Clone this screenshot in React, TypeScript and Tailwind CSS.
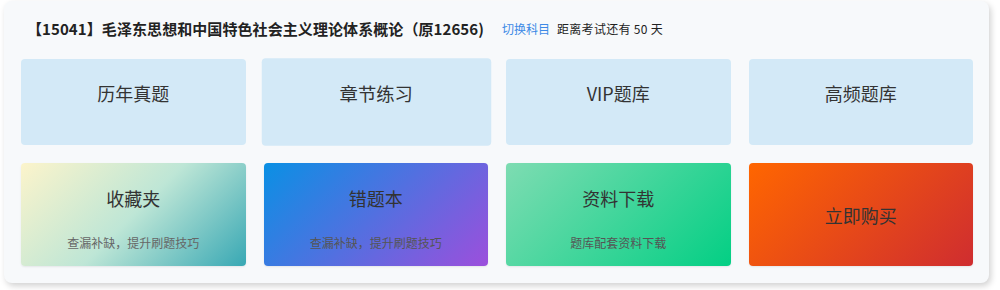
import React from "react";

const font = { fontFamily: '"Noto Sans CJK SC", "Noto Sans", sans-serif' };

export default function App() {
  return (
    <div className="w-[1000px] h-[290px] bg-white overflow-hidden" style={font}>
      <div className="ml-[4px] mt-[1px] w-[985px] h-[282px] rounded-lg bg-[#f7f9fb] shadow-[2px_3px_6px_rgba(0,0,0,0.18)] pt-[16px] pl-[17px] pr-[16px]">
        <div className="flex items-center h-[24px] pl-[6px]">
          <span className="text-[15px] font-bold text-[#222] leading-[24px] tracking-[0.08px]">【15041】毛泽东思想和中国特色社会主义理论体系概论（原12656)</span>
          <span className="ml-[18px] text-[12px] text-[#3d8ae6]">切换科目</span>
          <span className="ml-[7px] text-[12px] text-[#222] tracking-[0.3px]">距离考试还有 50 天</span>
        </div>
        <div className="mt-[18px] grid grid-cols-4 gap-x-[18px] gap-y-[18px]">
          {["历年真题", "章节练习", "VIP题库", "高频题库"].map((t, i) => (
            <div
              key={t}
              className={
                "h-[86px] rounded-[4px] bg-[#d3e9f7] flex justify-center pt-[22px] " +
                (i === 1 ? "scale-[1.02]" : "")
              }
            >
              <span className="text-[18px] leading-[24px] text-[#333]">{t}</span>
            </div>
          ))}
          <div className="h-[103px] rounded-[4px] bg-[linear-gradient(135deg,#fcf4cb_0%,#bee6d6_50%,#38a8b4_100%)] flex flex-col items-center pt-[23px] shadow-[0_1px_2px_rgba(0,0,0,0.08)]">
            <span className="text-[18px] leading-[24px] text-[#333]">收藏夹</span>
            <span className="mt-[25px] text-[12px] leading-[16px] text-[#666]">查漏补缺，提升刷题技巧</span>
          </div>
          <div className="h-[103px] rounded-[4px] bg-[linear-gradient(135deg,#0a90e4_0%,#9c4fdc_100%)] flex flex-col items-center pt-[23px] shadow-[0_1px_2px_rgba(0,0,0,0.08)]">
            <span className="text-[18px] leading-[24px] text-[#333]">错题本</span>
            <span className="mt-[25px] text-[12px] leading-[16px] text-[#555]">查漏补缺，提升刷题技巧</span>
          </div>
          <div className="h-[103px] rounded-[4px] bg-[linear-gradient(135deg,#7edcb2_0%,#03cf84_100%)] flex flex-col items-center pt-[23px] shadow-[0_1px_2px_rgba(0,0,0,0.08)]">
            <span className="text-[18px] leading-[24px] text-[#333]">资料下载</span>
            <span className="mt-[25px] text-[12px] leading-[16px] text-[#555]">题库配套资料下载</span>
          </div>
          <div className="h-[103px] rounded-[4px] bg-[linear-gradient(135deg,#ff6600_0%,#cf2d30_100%)] flex items-center justify-center shadow-[0_1px_2px_rgba(0,0,0,0.08)]">
            <span className="text-[18px] leading-[24px] text-[#333]">立即购买</span>
          </div>
        </div>
      </div>
    </div>
  );
}
